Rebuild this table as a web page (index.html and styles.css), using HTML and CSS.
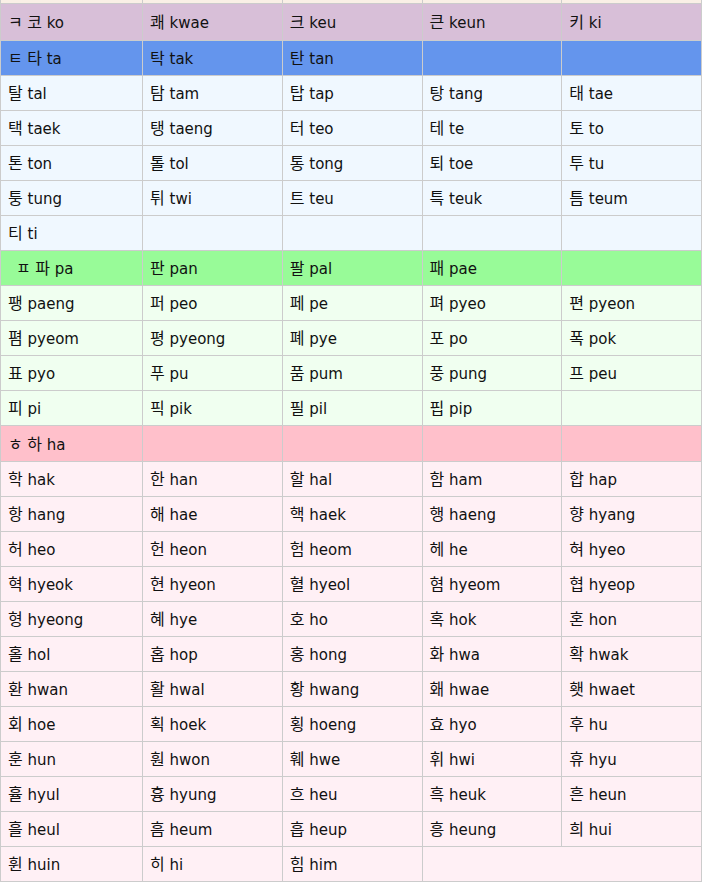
FILE: index.html
```html
<!DOCTYPE html>
<html lang="ko">
<head>
    <meta charset="UTF-8">
    <meta name="viewport" content="width=device-width, initial-scale=1.0">
    <title>한글 로마자 표기</title>
    <link rel="stylesheet" href="styles.css">
</head>
<body>
    <table class="romaja">
        <colgroup>
            <col class="col-first">
            <col><col><col><col>
        </colgroup>
        <tr class="strip"><td><div class="strip-fill"></div></td><td><div class="strip-fill"></div></td><td><div class="strip-fill"></div></td><td><div class="strip-fill"></div></td><td><div class="strip-fill"></div></td></tr>

        <tr class="head-k"><td><span class="hg">ㅋ 코</span> ko</td><td><span class="hg">쾌</span> kwae</td><td><span class="hg">크</span> keu</td><td><span class="hg">큰</span> keun</td><td><span class="hg">키</span> ki</td></tr>

        <tr class="head-t"><td><span class="hg">ㅌ 타</span> ta</td><td><span class="hg">탁</span> tak</td><td><span class="hg">탄</span> tan</td><td></td><td></td></tr>
        <tr class="row-t"><td><span class="hg">탈</span> tal</td><td><span class="hg">탐</span> tam</td><td><span class="hg">탑</span> tap</td><td><span class="hg">탕</span> tang</td><td><span class="hg">태</span> tae</td></tr>
        <tr class="row-t"><td><span class="hg">택</span> taek</td><td><span class="hg">탱</span> taeng</td><td><span class="hg">터</span> teo</td><td><span class="hg">테</span> te</td><td><span class="hg">토</span> to</td></tr>
        <tr class="row-t"><td><span class="hg">톤</span> ton</td><td><span class="hg">톨</span> tol</td><td><span class="hg">통</span> tong</td><td><span class="hg">퇴</span> toe</td><td><span class="hg">투</span> tu</td></tr>
        <tr class="row-t"><td><span class="hg">퉁</span> tung</td><td><span class="hg">튀</span> twi</td><td><span class="hg">트</span> teu</td><td><span class="hg">특</span> teuk</td><td><span class="hg">틈</span> teum</td></tr>
        <tr class="row-t"><td><span class="hg">티</span> ti</td><td></td><td></td><td></td><td></td></tr>

        <tr class="head-p"><td class="indent"><span class="hg">ㅍ 파</span> pa</td><td><span class="hg">판</span> pan</td><td><span class="hg">팔</span> pal</td><td><span class="hg">패</span> pae</td><td></td></tr>
        <tr class="row-p"><td><span class="hg">팽</span> paeng</td><td><span class="hg">퍼</span> peo</td><td><span class="hg">페</span> pe</td><td><span class="hg">펴</span> pyeo</td><td><span class="hg">편</span> pyeon</td></tr>
        <tr class="row-p"><td><span class="hg">폄</span> pyeom</td><td><span class="hg">평</span> pyeong</td><td><span class="hg">폐</span> pye</td><td><span class="hg">포</span> po</td><td><span class="hg">폭</span> pok</td></tr>
        <tr class="row-p"><td><span class="hg">표</span> pyo</td><td><span class="hg">푸</span> pu</td><td><span class="hg">품</span> pum</td><td><span class="hg">풍</span> pung</td><td><span class="hg">프</span> peu</td></tr>
        <tr class="row-p"><td><span class="hg">피</span> pi</td><td><span class="hg">픽</span> pik</td><td><span class="hg">필</span> pil</td><td><span class="hg">핍</span> pip</td><td></td></tr>

        <tr class="head-h"><td><span class="hg">ㅎ 하</span> ha</td><td></td><td></td><td></td><td></td></tr>
        <tr class="row-h"><td><span class="hg">학</span> hak</td><td><span class="hg">한</span> han</td><td><span class="hg">할</span> hal</td><td><span class="hg">함</span> ham</td><td><span class="hg">합</span> hap</td></tr>
        <tr class="row-h"><td><span class="hg">항</span> hang</td><td><span class="hg">해</span> hae</td><td><span class="hg">핵</span> haek</td><td><span class="hg">행</span> haeng</td><td><span class="hg">향</span> hyang</td></tr>
        <tr class="row-h"><td><span class="hg">허</span> heo</td><td><span class="hg">헌</span> heon</td><td><span class="hg">험</span> heom</td><td><span class="hg">헤</span> he</td><td><span class="hg">혀</span> hyeo</td></tr>
        <tr class="row-h"><td><span class="hg">혁</span> hyeok</td><td><span class="hg">현</span> hyeon</td><td><span class="hg">혈</span> hyeol</td><td><span class="hg">혐</span> hyeom</td><td><span class="hg">협</span> hyeop</td></tr>
        <tr class="row-h"><td><span class="hg">형</span> hyeong</td><td><span class="hg">혜</span> hye</td><td><span class="hg">호</span> ho</td><td><span class="hg">혹</span> hok</td><td><span class="hg">혼</span> hon</td></tr>
        <tr class="row-h"><td><span class="hg">홀</span> hol</td><td><span class="hg">홉</span> hop</td><td><span class="hg">홍</span> hong</td><td><span class="hg">화</span> hwa</td><td><span class="hg">확</span> hwak</td></tr>
        <tr class="row-h"><td><span class="hg">환</span> hwan</td><td><span class="hg">활</span> hwal</td><td><span class="hg">황</span> hwang</td><td><span class="hg">홰</span> hwae</td><td><span class="hg">횃</span> hwaet</td></tr>
        <tr class="row-h"><td><span class="hg">회</span> hoe</td><td><span class="hg">획</span> hoek</td><td><span class="hg">횡</span> hoeng</td><td><span class="hg">효</span> hyo</td><td><span class="hg">후</span> hu</td></tr>
        <tr class="row-h"><td><span class="hg">훈</span> hun</td><td><span class="hg">훤</span> hwon</td><td><span class="hg">훼</span> hwe</td><td><span class="hg">휘</span> hwi</td><td><span class="hg">휴</span> hyu</td></tr>
        <tr class="row-h"><td><span class="hg">휼</span> hyul</td><td><span class="hg">흉</span> hyung</td><td><span class="hg">흐</span> heu</td><td><span class="hg">흑</span> heuk</td><td><span class="hg">흔</span> heun</td></tr>
        <tr class="row-h"><td><span class="hg">흘</span> heul</td><td><span class="hg">흠</span> heum</td><td><span class="hg">흡</span> heup</td><td><span class="hg">흥</span> heung</td><td><span class="hg">희</span> hui</td></tr>
        <tr class="row-h"><td><span class="hg">휜</span> huin</td><td><span class="hg">히</span> hi</td><td><span class="hg">힘</span> him</td><td colspan="2"></td></tr>
    </table>
</body>
</html>
```

FILE: styles.css
```css
body {
    margin: 0;
    background-color: #fff;
    font-family: "DejaVu Sans", "Noto Sans CJK KR", sans-serif;
    font-size: 15px;
    color: #111;
}

.romaja {
    border-collapse: collapse;
    table-layout: fixed;
    width: 702px;
}

.col-first {
    width: 142px;
}

.romaja td {
    border: 1px solid #ccc;
    height: 34px;
    padding: 0 7px;
    line-height: 20px;
    vertical-align: middle;
    white-space: nowrap;
}

/* hangul part of a cell, a bit larger than the romanization */
.hg {
    font-family: "Noto Sans CJK KR", sans-serif;
    font-size: 16px;
    font-weight: 400;
}

/* bottom edge of the row above, cut off by the screenshot */
.romaja .strip td {
    border-top: none;
    height: auto;
    padding: 0;
    line-height: 0;
    background-color: #faf0e6;
}

.strip-fill {
    height: 3px;
}

.head-k td {
    height: 36px;
    background-color: #d8bfd8;
}

.head-t td {
    background-color: #6495ed;
}

.row-t td {
    background-color: #f0f8ff;
}

.head-p td {
    background-color: #98fb98;
}

.row-p td {
    background-color: #f0fff0;
}

.head-h td {
    height: 35px;
    background-color: #ffc0cb;
}

.row-h td {
    background-color: #fff0f5;
}

.romaja td.indent {
    padding-left: 15px;
}
```
